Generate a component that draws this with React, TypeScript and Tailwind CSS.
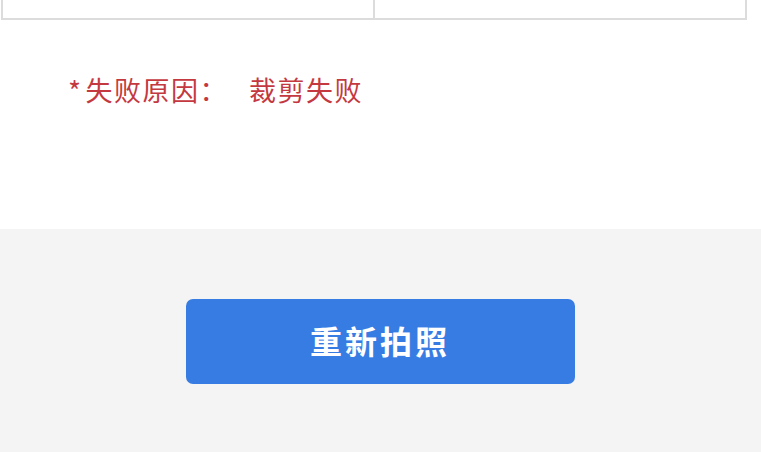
import React from 'react';

const cjk = { fontFamily: '"Noto Sans CJK SC", "Noto Sans", sans-serif' };

export default function App() {
  return (
    <div className="w-[761px] h-[452px] flex flex-col bg-white overflow-hidden" style={cjk}>
      {/* Table bottom edge */}
      <div className="h-[229px] flex flex-col">
        <div className="ml-[1px] w-[746px] h-[20px] flex border-2 border-t-0 border-[#dcdcdc]">
          <div className="flex-1 border-r-2 border-[#dcdcdc]" />
          <div className="flex-1" />
        </div>

        {/* Failure reason */}
        <div className="pl-[68px] pt-[52px] flex items-center text-[27px] leading-[36px] text-[#c4393f] tracking-[1.5px]">
          <span className="mr-[3px] text-[28px]">*</span>
          <span>失败原因：</span>
          <span className="ml-[21px]">裁剪失败</span>
        </div>
      </div>

      {/* Bottom action area */}
      <div className="flex-1 bg-[#f4f4f4] pt-[70px] flex justify-center">
        <button className="w-[389px] h-[85px] rounded-[7px] bg-[#377ce3] text-white text-[32px] font-bold tracking-[3px] ml-[-1px] pb-[3px]">
          重新拍照
        </button>
      </div>
    </div>
  );
}
